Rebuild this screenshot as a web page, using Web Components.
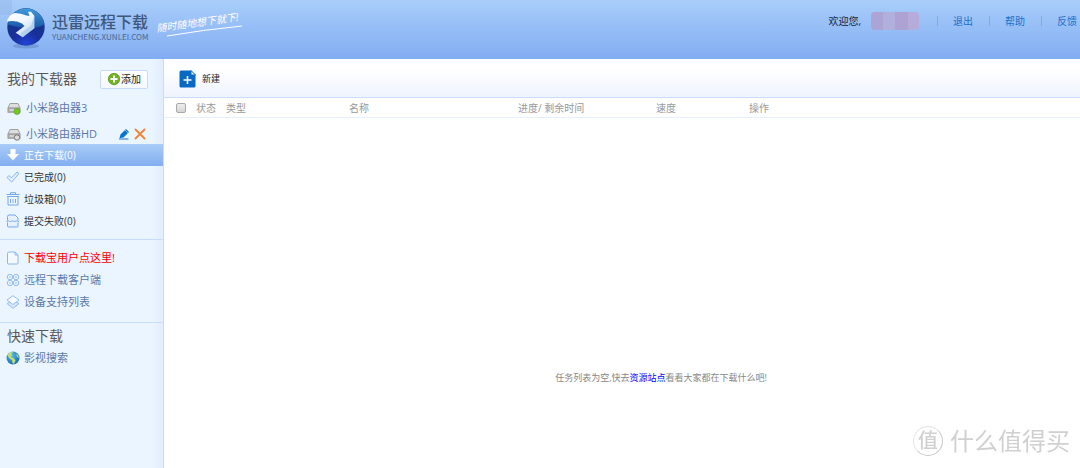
<!DOCTYPE html>
<html lang="zh-CN">
<head>
<meta charset="utf-8">
<title>迅雷远程下载</title>
<style>
html, body { margin: 0; height: 100%; }
body { font-family: "Open Sans", "Noto Sans CJK SC", sans-serif; font-size: 9px; line-height: 14px; color: #333; background: #fff; }
</style>
</head>
<body>
<remote-app></remote-app>

<script>
const icons = {
  down: '<path d="M4.500 1h5v5H13l-6 6.500L1 6h3.500z" fill="#fff"/>',
  check: '<path d="M1 7.500l2-2 2.500 2.500L11 2l2 1.600L5.700 12z" fill="#e4f0fe" stroke="#86b5ee"/>',
  trash: '<path d="M.5 2.500h13M4.500 2V.7h5V2M2 4.500v8.500h10V4.500" fill="#eef6ff" stroke="#75a9ec"/><path d="M1 4.500h12M4.500 7v4M7 7v4M9.500 7v4" stroke="#75a9ec" fill="none"/>',
  fail: '<path d="M1.500 6.500v-4q0-1.500 1.500-1.500h6l3 3v2.500M1.500 8.500V12q0 1 1 1h8.500q1 0 1-1V8.500" fill="#e4f0fe" stroke="#75a9ec"/><path d="M.5 7.500l2-.6 2 .6 2-.6 2 .6 2-.6 2.500.6" fill="none" stroke="#75a9ec"/>',
  file: '<path d="M1.500 2.500q0-1.500 1.500-1.500h6l3 3v8q0 1-1 1H2.500q-1 0-1-1z" fill="#f4f9ff" stroke="#8bb6ee"/><path d="M9 1v3h3" fill="none" stroke="#8bb6ee"/>',
  client: '<g fill="#eef6ff" stroke="#94bcf0"><circle cx="4" cy="4" r="2.700"/><circle cx="10" cy="4" r="2.700"/><circle cx="4" cy="10" r="2.700"/><circle cx="10" cy="10" r="2.700"/></g><path d="M3 4h2M9 4h2M3 10h2M9 10h2" stroke="#94bcf0"/>',
  layers: '<path d="M1 8.500L7 13.300l6-4.800-6-2.500z" fill="#d8e9fd" stroke="#94bcf0"/><path d="M1 5l6-4.300L13 5 7 9.500z" fill="#f7fbff" stroke="#94bcf0"/>',
  globe: '<defs><radialGradient id="g" cx=".4" cy=".3" r=".8"><stop stop-color="#5db9ee"/><stop offset="1" stop-color="#0962ad"/></radialGradient></defs><circle cx="7" cy="7" r="6.500" fill="url(#g)"/><path d="M1.500 4L4 1.300 7 1 5.500 3 6 4.500 4.500 5.500l3.500 2 1.500 2L8 13l-1.500-1L6 9 3 7z" fill="#c4e06c"/><path d="M10 3l2 1 1 3-2-1z" fill="#a5d67b"/>',
  router: '<path d="M3 2.500h8l2 4.500H1z" fill="#dedede" stroke="#a0a0a0"/><path d="M.8 7h12.400v4.500H.8z" fill="#a9a9a9" stroke="#999" stroke-width=".6"/><path d="M2.500 9h5" stroke="#fff"/>',
  add: '<circle cx="7" cy="7" r="5.700" fill="#70b51c" stroke="#4b9014" stroke-width=".7"/><path d="M7 3.500v7M3.500 7h7" stroke="#fff" stroke-width="2"/>',
  pen: '<path d="M3.500 7.500L9 2l3 3-5.500 5.500-4 .8z" fill="#0874cd"/><path d="M8 3l3 3" stroke="#b9dcfa" stroke-width=".7"/><path d="M2 12h9.500" stroke="#1b76c8"/>',
  close: '<path d="M2.500 2.500l9 9M11.500 2.500l-9 9" stroke="#f58232" stroke-width="1.800" stroke-linecap="round"/>'
};
const svg = (name, extra = '') => `<svg width="14" height="14" viewBox="0 0 14 14" aria-hidden="true">${icons[name]}${extra}</svg>`;

function define(name, render) {
  customElements.define(name, class extends HTMLElement {
    connectedCallback() {
      if (this.shadowRoot) return;
      const t = document.createElement('template');
      t.innerHTML = render(this);
      this.attachShadow({ mode: 'open' }).append(t.content.cloneNode(true));
    }
  });
}

define('site-logo', () => `
<style>
:host { display: flex; align-items: center; }
svg { display: block; flex: none; overflow: visible; }
.orb { margin-right: 6px; }
strong { display: block; font-size: 16px; line-height: 18px; font-weight: 500; color: #3f587e; }
small { display: block; font: 8px/12px "Noto Sans CJK SC", sans-serif; color: #4a6995; }
.slogan { margin-left: 8px; }
</style>
<svg class="orb" width="40" height="44" viewBox="0 0 40 44" aria-hidden="true">
<defs><radialGradient id="o" cx=".5" cy=".95" r=".9"><stop stop-color="#2244d8"/><stop offset=".4" stop-color="#182f9a"/><stop offset="1" stop-color="#163a80"/></radialGradient>
<linearGradient id="w" x2=".6" y2="1"><stop stop-color="#fff"/><stop offset=".5" stop-color="#f2f9ff"/><stop offset="1" stop-color="#c5dbf3"/></linearGradient>
<linearGradient id="h" x2="0" y2="1"><stop stop-color="#3f9bdc"/><stop offset="1" stop-color="#1b55a6"/></linearGradient></defs>
<ellipse cx="20" cy="40" rx="13" ry="2.500" fill="#5275ae" opacity=".4"/>
<circle cx="20" cy="21" r="18.700" fill="url(#o)"/><path d="M1.500 18.500A18.700 18.700 0 0 1 38.500 18.500Q30 23 20 22T1.500 18.500z" fill="url(#h)"/>
<path d="M1.300 14Q4 8 9 7q6 0 11.500 2.500l3 .5L22 5.700h3l3.300 4v12.600L16.700 31.300l-7-4.600L18.500 20 16 17.500Q9 14 1.300 15.500z" fill="url(#w)"/>
<path d="M28.300 9.700v12.600L16.700 31.300l-1.700-4 10-7.800z" fill="#9fc3ea" opacity=".6"/>
</svg>
<div><strong>迅雷远程下载</strong><small>YUANCHENG.XUNLEI.COM</small></div>
<svg class="slogan" width="96" height="40" viewBox="0 0 96 40" fill="#fff">
<g transform="rotate(-8 0 24)"><text x="0" y="24" font-size="10" font-style="italic">随时随地想下就下!</text></g>
<path d="M10 28Q45 22 85 18" fill="none" stroke="#fff" stroke-width="1"/>
</svg>`);

define('user-nav', () => `
<style>
:host { display: flex; align-items: center; font-size: 10px; line-height: 10px; color: #12263f; }
.name { width: 48px; height: 18px; margin: 0 18px 0 10px; border-radius: 4px; background: linear-gradient(90deg, #aca4d4 25%, #b1afdc 25% 50%, #aea2d4 50% 78%, #b5acd9 78%); }
ul { display: flex; margin: 0; padding: 0; list-style: none; }
li { border-left: 1px solid #8aa5e0; padding: 0 16px 0 15px; }
li:last-child { padding-right: 3px; }
a { color: #1d6fc9; text-decoration: none; }
</style>
<span>欢迎您,</span><span class="name"></span>
<ul><li><a href="#logout">退出</a></li><li><a href="#help">帮助</a></li><li><a href="#feedback">反馈</a></li></ul>`);

define('app-header', () => `
<style>
:host { display: flex; justify-content: space-between; align-items: flex-start; min-height: 59px; box-sizing: border-box; padding-left: 6px; background: linear-gradient(#7c9fd033, #7c9fd033) 0 0 / 12px 15px no-repeat, linear-gradient(#a9cefb, #81acf1); }
site-logo { margin-top: 6px; }
user-nav { margin-top: 12px; }
</style><site-logo></site-logo><user-nav></user-nav>`);

define('device-row', el => `
<style>
:host { display: flex; align-items: center; height: 20px; padding: 0 16px 0 7px; font-size: 11px; color: #5b79a8; }
a { flex: 1; display: flex; align-items: center; gap: 5px; color: inherit; text-decoration: none; white-space: nowrap; }
button { display: flex; border: 0; padding: 0; margin-left: 2px; background: none; }
svg { display: block; }
</style>
<a href="#device">${svg('router', el.hasAttribute('online') ? '<circle cx="10" cy="10.500" r="3" fill="#78c820" stroke="#519c19" stroke-width=".6"/>' : '<circle cx="10" cy="10.500" r="2.700" fill="#ddd" stroke="#777"/>')}<span><slot></slot></span></a>
${el.hasAttribute('editable') ? `<button aria-label="编辑">${svg('pen')}</button><button aria-label="删除">${svg('close')}</button>` : ''}`);

define('side-item', el => `
<style>
:host { display: block; font-size: 10px; color: #333; }
:host([large]) { font-size: 11px; color: #5b79a8; }
:host([alert]) { color: #f00; }
:host([current]) { color: #fff; background: linear-gradient(#a9ccf8, #82aef0); }
a { display: flex; align-items: center; gap: 4px; height: 22px; padding-left: 6px; color: inherit; text-decoration: none; }
svg { display: block; }
</style>
<a href="#list">${svg(el.getAttribute('icon'))}<span><slot></slot></span></a>`);

define('side-bar', () => `
<style>
:host { display: block; box-sizing: border-box; border-right: 1px solid #c8ddfa; background: linear-gradient(90deg, #ebf5ff 93%, #e0edfd); }
header { display: flex; align-items: center; justify-content: space-between; height: 36px; box-sizing: border-box; padding: 4px 15px 0 7px; }
header.quick { height: 24px; padding-top: 2px; }
h2 { margin: 0; font-size: 14px; line-height: 20px; font-weight: 400; color: #595959; }
button { display: flex; align-items: center; height: 19px; box-sizing: border-box; padding: 0 6px; border: 1px solid #c5dbf8; border-radius: 2px; background: linear-gradient(#fff, #f5faff); font: inherit; font-size: 10px; color: #222; }
.devices { display: grid; gap: 6px; padding-top: 3px; }
.tasks { padding-bottom: 7px; }
.services { padding: 7px 0 9px; }
.services, .fast { border-top: 1px solid #c8ddf9; }
</style>
<header><h2>我的下载器</h2><button>${svg('add')}添加</button></header>
<nav class="devices" aria-label="设备"><device-row online>小米路由器3</device-row><device-row editable>小米路由器HD</device-row></nav>
<nav class="tasks" aria-label="任务"><side-item icon="down" current>正在下载(0)</side-item><side-item icon="check">已完成(0)</side-item><side-item icon="trash">垃圾箱(0)</side-item><side-item icon="fail">提交失败(0)</side-item></nav>
<nav class="services" aria-label="服务"><side-item icon="file" large alert>下载宝用户点这里!</side-item><side-item icon="client" large>远程下载客户端</side-item><side-item icon="layers" large>设备支持列表</side-item></nav>
<section class="fast"><header class="quick"><h2>快速下载</h2></header><side-item icon="globe" large>影视搜索</side-item></section>`);

define('tool-bar', () => `
<style>
:host { display: flex; align-items: center; height: 39px; box-sizing: border-box; padding: 2px 15px 0; border-bottom: 1px solid #c8ddf9; background: linear-gradient(#fff 25%, #eff4fe); }
button { display: flex; align-items: center; gap: 6px; padding: 0; border: 0; background: none; font: inherit; color: #222; }
</style>
<button><svg width="17" height="18" viewBox="0 0 17 18" aria-hidden="true"><path d="M2 .5h10l4.500 4.500v11q0 1.500-1.500 1.500H2Q.5 17.500.5 16V2Q.5.500 2 .5z" fill="#0869c4"/><path d="M12 .5v4.500h4.500z" fill="#e9f4ff" stroke="#0869c4"/><path d="M8.500 6v8M4.500 10h8" stroke="#fff" stroke-width="1.600"/></svg><slot></slot></button>`);

define('task-table', () => `
<style>
:host { display: block; }
table { width: 100%; table-layout: fixed; border-collapse: collapse; font-size: 10px; color: #999; }
th { height: 19px; padding: 0; border-bottom: 1px solid #e6f0fc; font-weight: 400; text-align: left; white-space: nowrap; }
.c1 { width: 32px; } .c2 { width: 30px; } .c3 { width: 123px; } .c4 { width: 169px; } .c5 { width: 138px; } .c6 { width: 93px; }
input { display: block; appearance: none; width: 10px; height: 10px; box-sizing: border-box; margin: 0 0 0 12px; border: 1px solid #aaa; border-radius: 2px; background: linear-gradient(#eee, #d5d5d5); }
p { margin: 0; padding: 253px 0 60px 78px; text-align: center; color: #888; }
a { color: #00f; text-decoration: none; }
</style>
<table><thead><tr><th class="c1"><input type="checkbox" aria-label="全选"></th><th class="c2">状态</th><th class="c3">类型</th><th class="c4">名称</th><th class="c5">进度/ 剩余时间</th><th class="c6">速度</th><th>操作</th></tr></thead></table>
<p>任务列表为空,快去<a href="#sites">资源站点</a>看看大家都在下载什么吧!</p>`);

define('water-mark', () => `
<style>
:host { position: fixed; right: 10px; bottom: 10px; display: flex; align-items: center; gap: 7px; font-size: 24px; line-height: 34px; color: #d0d0d0; }
b { display: block; box-sizing: border-box; width: 30px; height: 30px; border: 1px solid #e4e4e4; border-right-color: #c8c8c8; border-bottom-color: #c8c8c8; border-radius: 50%; font-size: 20px; line-height: 27px; font-weight: 500; text-align: center; }
</style><b>值</b><span>什么值得买</span>`);

define('remote-app', () => `
<style>
:host { display: grid; grid-template: auto 1fr / 164px 1fr; min-height: 100%; }
app-header { grid-column: 1 / -1; }
main { min-width: 0; }
</style>
<app-header></app-header><side-bar></side-bar><main><tool-bar>新建</tool-bar><task-table></task-table></main><water-mark></water-mark>`);
</script>
</body>
</html>
